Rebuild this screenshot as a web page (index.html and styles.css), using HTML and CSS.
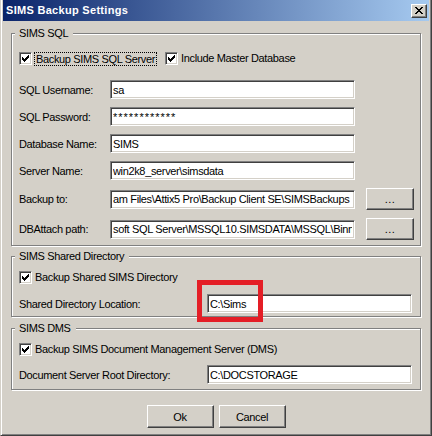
FILE: index.html
```html
<!DOCTYPE html>
<html>
<head>
<meta charset="utf-8">
<title>SIMS Backup Settings</title>
<link rel="stylesheet" href="styles.css">
</head>
<body>
<div class="window">
  <div class="titlebar">
    <span class="title">SIMS Backup Settings</span>
    <button class="close" aria-label="Close"><svg width="8" height="7" viewBox="0 0 8 7" shape-rendering="crispEdges"><path d="M0 0h2v1H0zM6 0h2v1H6zM1 1h2v1H1zM5 1h2v1H5zM2 2h4v1H2zM3 3h2v1H3zM2 4h4v1H2zM1 5h2v1H1zM5 5h2v1H5zM0 6h2v1H0zM6 6h2v1H6z"/></svg></button>
  </div>
  <div class="content">
    <fieldset class="group g-sql">
      <legend>SIMS SQL</legend>
      <div class="checks">
        <label class="check focus"><span class="box"><svg width="7" height="7" viewBox="0 0 7 7" shape-rendering="crispEdges"><path d="M6 0h1v1H6zM5 1h2v1H5zM0 2h1v1H0zM4 2h3v1H4zM0 3h2v1H0zM3 3h3v1H3zM0 4h5v1H0zM1 5h3v1H1zM2 6h1v1H2z"/></svg></span><span class="cap">Backup SIMS SQL Server</span></label>
        <label class="check second"><span class="box"><svg width="7" height="7" viewBox="0 0 7 7" shape-rendering="crispEdges"><path d="M6 0h1v1H6zM5 1h2v1H5zM0 2h1v1H0zM4 2h3v1H4zM0 3h2v1H0zM3 3h3v1H3zM0 4h5v1H0zM1 5h3v1H1zM2 6h1v1H2z"/></svg></span><span class="cap">Include Master Database</span></label>
      </div>
      <div class="row first"><span class="lbl">SQL Username:</span><input class="field" type="text" value="sa"></div>
      <div class="row"><span class="lbl">SQL Password:</span><input class="field pw" type="text" value="************"></div>
      <div class="row"><span class="lbl">Database Name:</span><input class="field" type="text" value="SIMS"></div>
      <div class="row"><span class="lbl">Server Name:</span><input class="field" type="text" value="win2k8_server\simsdata"></div>
      <div class="row"><span class="lbl">Backup to:</span><input class="field" type="text" value="am Files\Attix5 Pro\Backup Client SE\SIMSBackups"><button class="btn dots">...</button></div>
      <div class="row"><span class="lbl">DBAttach path:</span><input class="field" type="text" value="soft SQL Server\MSSQL10.SIMSDATA\MSSQL\Binn"><button class="btn dots">...</button></div>
    </fieldset>

    <fieldset class="group g-shared">
      <legend>SIMS Shared Directory</legend>
      <div class="checks">
        <label class="check"><span class="box"><svg width="7" height="7" viewBox="0 0 7 7" shape-rendering="crispEdges"><path d="M6 0h1v1H6zM5 1h2v1H5zM0 2h1v1H0zM4 2h3v1H4zM0 3h2v1H0zM3 3h3v1H3zM0 4h5v1H0zM1 5h3v1H1zM2 6h1v1H2z"/></svg></span><span class="cap">Backup Shared SIMS Directory</span></label>
      </div>
      <div class="row"><span class="lbl">Shared Directory Location:</span><span class="anchor"><input class="field wide" type="text" value="C:\Sims"><span class="mark"></span></span></div>
    </fieldset>

    <fieldset class="group g-dms">
      <legend>SIMS DMS</legend>
      <div class="checks">
        <label class="check"><span class="box"><svg width="7" height="7" viewBox="0 0 7 7" shape-rendering="crispEdges"><path d="M6 0h1v1H6zM5 1h2v1H5zM0 2h1v1H0zM4 2h3v1H4zM0 3h2v1H0zM3 3h3v1H3zM0 4h5v1H0zM1 5h3v1H1zM2 6h1v1H2z"/></svg></span><span class="cap">Backup SIMS Document Management Server (DMS)</span></label>
      </div>
      <div class="row"><span class="lbl">Document Server Root Directory:</span><input class="field wide" type="text" value="C:\DOCSTORAGE"></div>
    </fieldset>

    <div class="actions">
      <button class="btn action">Ok</button>
      <button class="btn action">Cancel</button>
    </div>
  </div>
</div>
</body>
</html>
```

FILE: styles.css
```css
* { box-sizing: border-box; }
html, body { margin: 0; padding: 0; }
body {
  width: 432px;
  height: 436px;
  overflow: hidden;
  background: #d4d0c8;
  font-family: "Liberation Sans", Arial, sans-serif;
  font-size: 11px;
  letter-spacing: -0.35px;
  color: #000;
}
.window {
  width: 432px;
  height: 436px;
  background: #d4d0c8;
  border-left: 1px solid #d4d0c8;
  border-right: 1px solid #404040;
  border-bottom: 1px solid #404040;
  box-shadow: inset 1px 0 0 #fff, inset -1px -1px 0 #808080;
  padding: 0 2px 2px 2px;
  display: flex;
  flex-direction: column;
}
.titlebar {
  height: 21px;
  flex: none;
  display: flex;
  align-items: center;
  justify-content: space-between;
  padding: 0 2px 0 3px;
  background: linear-gradient(to right, #0a246a, #a6caf0);
}
.title {
  color: #fff;
  font-weight: bold;
  font-size: 11px;
  letter-spacing: 0.3px;
  line-height: 13px;
}
.close {
  width: 16px;
  height: 14px;
  padding: 0;
  margin: 0;
  display: flex;
  align-items: center;
  justify-content: center;
  background: #d4d0c8;
  border: 1px solid;
  border-color: #fff #404040 #404040 #fff;
  box-shadow: inset -1px -1px 0 #808080;
}
.close svg { display: block; fill: #000; }
.content {
  padding: 6px 8px 0 8px;
  display: flex;
  flex-direction: column;
}
.group {
  margin: 0;
  min-width: 0;
  border: 1px solid #808080;
  box-shadow: inset 1px 1px 0 #fff, 1px 1px 0 #fff;
  padding: 8px 6px 5px 7px;
}
.group legend {
  margin-left: -4px;
  padding: 0 5px 0 4px;
  line-height: 13px;
  background: #d4d0c8;
}
.g-sql { padding-top: 12px; }
.g-shared { margin-top: 4px; padding-bottom: 3px; }
.g-dms { margin-top: 5px; }
.checks {
  display: flex;
  align-items: center;
  height: 13px;
}
.check {
  display: flex;
  align-items: center;
  line-height: 13px;
  white-space: nowrap;
}
.box {
  width: 13px;
  height: 13px;
  flex: none;
  background: #fff;
  border: 1px solid;
  border-color: #808080 #fff #fff #808080;
  box-shadow: inset 1px 1px 0 #404040, inset -1px -1px 0 #d4d0c8;
  display: flex;
  align-items: center;
  justify-content: center;
}
.box svg { display: block; fill: #000; }
.cap { margin-left: 3px; }
.focus .cap {
  margin-left: 2px;
  padding: 0 1px;
  border: 1px dotted #000;
  line-height: 12px;
}
.second { margin-left: 8px; }
.row {
  display: flex;
  align-items: center;
  margin-top: 8px;
}
.row.first { margin-top: 15px; }
.g-shared .row { margin-top: 10px; }
.g-dms .row { margin-top: 9px; }
.lbl {
  width: 91px;
  flex: none;
  white-space: nowrap;
}
.g-shared .lbl, .g-dms .lbl { width: 188px; }
.field {
  width: 245px;
  height: 19px;
  flex: none;
  margin: 0;
  padding: 0 2px;
  font: inherit;
  letter-spacing: inherit;
  color: #000;
  background: #fff;
  border: 1px solid;
  border-color: #808080 #fff #fff #808080;
  box-shadow: inset 1px 1px 0 #404040, inset -1px -1px 0 #d4d0c8;
  outline: none;
}
.field.pw { letter-spacing: 1px; }
.field.wide { width: 205px; }
.anchor {
  position: relative;
  display: flex;
}
.mark {
  position: absolute;
  left: -10px;
  top: -14px;
  width: 66px;
  height: 42px;
  border: 5px solid #e41e26;
  pointer-events: none;
}
.btn {
  margin: 0;
  padding: 0;
  font: inherit;
  letter-spacing: inherit;
  color: #000;
  background: #d4d0c8;
  border: 1px solid;
  border-color: #fff #404040 #404040 #fff;
  box-shadow: inset -1px -1px 0 #808080;
}
.dots {
  width: 48px;
  height: 22px;
  margin-left: 11px;
  flex: none;
  letter-spacing: 0.5px;
}
.actions {
  display: flex;
  justify-content: center;
  gap: 5px;
  margin-top: 15px;
}
.action {
  width: 67px;
  height: 23px;
}
```
